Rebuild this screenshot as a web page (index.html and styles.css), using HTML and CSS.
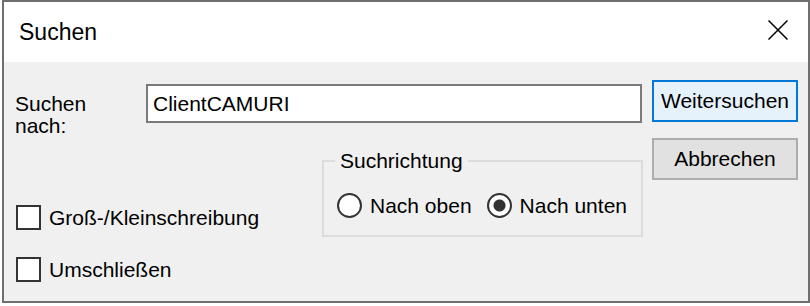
FILE: index.html
```html
<!DOCTYPE html>
<html lang="de">
<head>
<meta charset="utf-8">
<title>Suchen</title>
<link rel="stylesheet" href="styles.css">
</head>
<body>
<div class="window">
  <div class="titlebar">
    <span class="title">Suchen</span>
    <svg class="close" width="20" height="20" viewBox="0 0 20 20" aria-hidden="true">
      <path d="M0.5 0.5 L19.5 19.5 M19.5 0.5 L0.5 19.5" stroke="#000" stroke-width="1.5" fill="none"/>
    </svg>
  </div>
  <div class="content">
    <div class="main">
      <div class="search-row">
        <label class="label">Suchen<br>nach:</label>
        <div class="input">ClientCAMURI</div>
      </div>
      <div class="lower">
        <div class="options">
          <div class="check-row"><span class="checkbox"></span><span>Groß-/Kleinschreibung</span></div>
          <div class="check-row"><span class="checkbox"></span><span>Umschließen</span></div>
        </div>
        <fieldset class="group">
          <legend class="legend">Suchrichtung</legend>
          <div class="radio-row">
            <span class="radio-item"><span class="radio"></span><span>Nach oben</span></span>
            <span class="radio-item"><span class="radio checked"></span><span>Nach unten</span></span>
          </div>
        </fieldset>
      </div>
    </div>
    <div class="buttons">
      <div class="button default">Weitersuchen</div>
      <div class="button">Abbrechen</div>
    </div>
  </div>
</div>
</body>
</html>
```
FILE: styles.css
```css
html, body {
  margin: 0;
  padding: 0;
  background: #ffffff;
}
body {
  padding-left: 2px;
  font-family: "Liberation Sans", Arial, sans-serif;
  font-size: 21px;
  color: #000;
}
.window {
  width: 808px;
  height: 303px;
  box-sizing: border-box;
  border: 2px solid #6f6f6f;
  display: flex;
  flex-direction: column;
  background: #f0f0f0;
}
.titlebar {
  height: 60px;
  background: #ffffff;
  display: flex;
  align-items: center;
  padding: 0 20px 0 15px;
}
.title {
  font-size: 23px;
  flex: 1;
  line-height: 28px;
}
.close {
  display: block;
  margin-top: -4px;
}
.content {
  flex: 1;
  display: flex;
  padding: 18px 10px 0 11px;
}
.main {
  width: 627px;
  padding-top: 4px;
  margin-right: 10px;
}
.search-row {
  display: flex;
  align-items: flex-start;
}
.label {
  width: 131px;
  line-height: 22px;
  margin-top: 9px;
}
.input {
  width: 496px;
  height: 39px;
  box-sizing: border-box;
  border: 2px solid #7a7a7a;
  background: #fff;
  display: flex;
  align-items: center;
  padding-left: 5px;
  line-height: 24px;
}
.lower {
  display: flex;
  align-items: flex-start;
  margin-top: 12px;
}
.options {
  padding-top: 56px;
  display: flex;
  flex-direction: column;
  gap: 27px;
  padding-left: 1px;
}
.check-row {
  display: flex;
  align-items: center;
  gap: 8px;
  height: 25px;
  line-height: 24px;
}
.checkbox {
  width: 25px;
  height: 25px;
  box-sizing: border-box;
  border: 2px solid #333;
  background: #fff;
}
.group {
  margin: 0 -1px 0 auto;
  width: 321px;
  box-sizing: border-box;
  border: 2px solid #dcdcdc;
  padding: 20px 10px 17px 13px;
  min-width: 0;
}
.legend {
  margin-left: -2px;
  padding: 0 5px;
  line-height: 24px;
}
.radio-row {
  display: flex;
  align-items: center;
  gap: 15px;
  height: 25px;
  line-height: 24px;
}
.radio-item {
  display: flex;
  align-items: center;
  gap: 8px;
}
.radio {
  width: 25px;
  height: 25px;
  box-sizing: border-box;
  border: 2px solid #333;
  border-radius: 50%;
  background: #fff;
}
.radio.checked {
  background: radial-gradient(circle, #333 0, #333 5.5px, #fff 6.5px);
}
.buttons {
  width: 146px;
  display: flex;
  flex-direction: column;
  gap: 16px;
}
.button {
  height: 42px;
  box-sizing: border-box;
  border: 2px solid #adadad;
  background: #e1e1e1;
  display: flex;
  align-items: center;
  justify-content: center;
  line-height: 24px;
}
.button.default {
  border-color: #0078d7;
  background: #e5f1fb;
}
```
